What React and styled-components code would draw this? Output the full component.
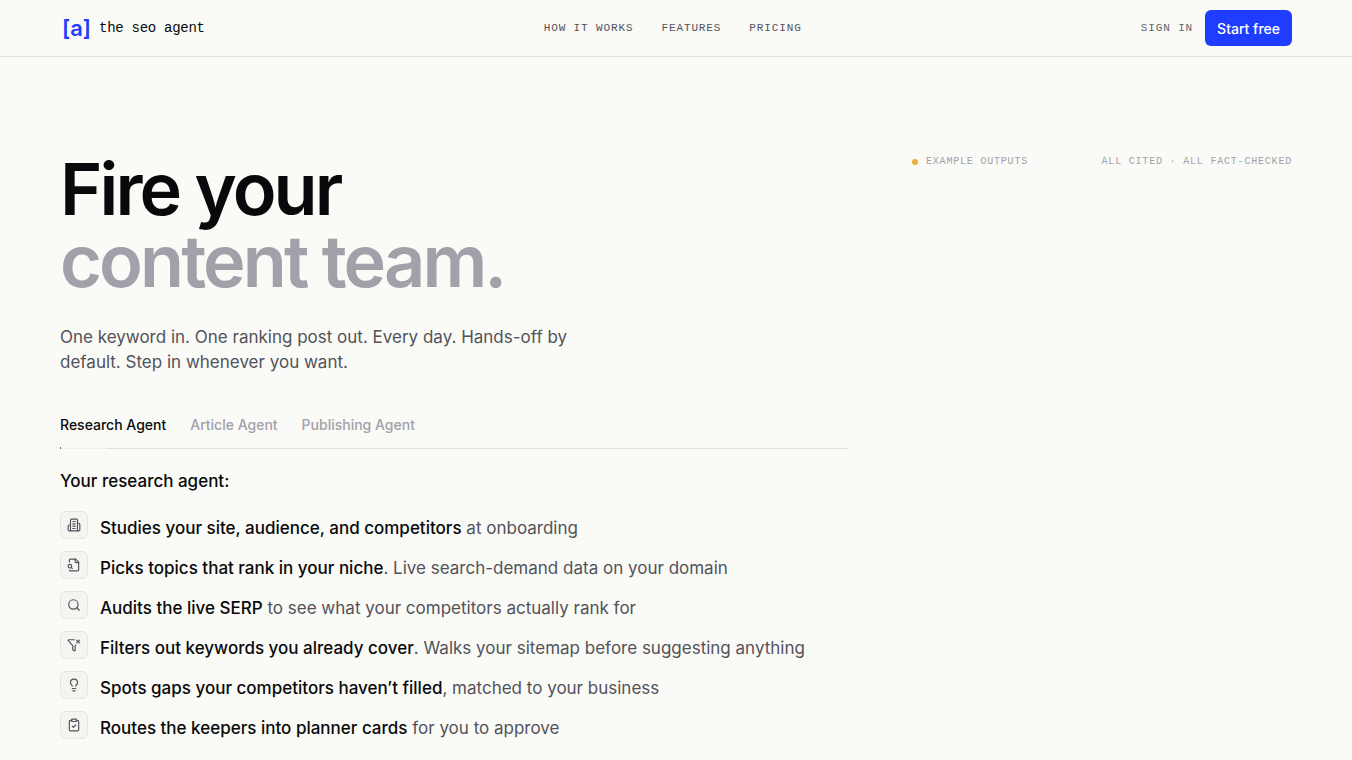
import React, { useState } from "react";
import styled, { createGlobalStyle } from "styled-components";
import { ClipboardCheck, FunnelX, Lightbulb, Search } from "lucide-react";

const agents = ["Research Agent", "Article Agent", "Publishing Agent"];

const steps = [
  { icon: BuildingIcon, title: "Studies your site, audience, and competitors", detail: " at onboarding" },
  { icon: FileLensIcon, title: "Picks topics that rank in your niche", detail: ". Live search-demand data on your domain" },
  { icon: Search, title: "Audits the live SERP", detail: " to see what your competitors actually rank for" },
  { icon: FunnelX, title: "Filters out keywords you already cover", detail: ". Walks your sitemap before suggesting anything" },
  { icon: Lightbulb, title: "Spots gaps your competitors haven’t filled", detail: ", matched to your business" },
  { icon: ClipboardCheck, title: "Routes the keepers into planner cards", detail: " for you to approve" },
];

function LineIcon({ size, children }) {
  return (
    <svg
      width={size}
      height={size}
      viewBox="0 0 24 24"
      fill="none"
      stroke="currentColor"
      strokeWidth="2"
      strokeLinecap="round"
      strokeLinejoin="round"
      aria-hidden="true"
    >
      {children}
    </svg>
  );
}

function BuildingIcon({ size }) {
  return (
    <LineIcon size={size}>
      <path d="M6 22V4a2 2 0 0 1 2-2h8a2 2 0 0 1 2 2v18Z" />
      <path d="M6 12H4a2 2 0 0 0-2 2v6a2 2 0 0 0 2 2h2" />
      <path d="M18 9h2a2 2 0 0 1 2 2v9a2 2 0 0 1-2 2h-2" />
      <path d="M10 6h4" />
      <path d="M10 10h4" />
      <path d="M10 14h4" />
      <path d="M10 18h4" />
    </LineIcon>
  );
}

function FileLensIcon({ size }) {
  return (
    <LineIcon size={size}>
      <path d="M14 2v4a2 2 0 0 0 2 2h4" />
      <path d="M4.268 21a2 2 0 0 0 1.727 1H18a2 2 0 0 0 2-2V7l-5-5H6a2 2 0 0 0-2 2v3" />
      <path d="m9 18-1.5-1.5" />
      <circle cx="5" cy="14" r="3" />
    </LineIcon>
  );
}

export default function App() {
  const [active, setActive] = useState(0);

  return (
    <>
      <GlobalStyle />
      <Header>
        <Brand href="#">
          <Mark>[a]</Mark>
          <BrandName>the seo agent</BrandName>
        </Brand>
        <Nav>
          <NavLink href="#how">How it works</NavLink>
          <NavLink href="#features">Features</NavLink>
          <NavLink href="#pricing">Pricing</NavLink>
        </Nav>
        <Actions>
          <SignIn href="#sign-in">Sign in</SignIn>
          <StartButton type="button">Start free</StartButton>
        </Actions>
      </Header>
      <Hero>
        <div>
          <Title>
            Fire your
            <Muted>content team.</Muted>
          </Title>
          <Lead>
            One keyword in. One ranking post out. Every day. Hands-off by default. Step in whenever you want.
          </Lead>
          <Tabs role="tablist">
            {agents.map((name, i) => (
              <Tab key={name} type="button" role="tab" aria-selected={i === active} $active={i === active} onClick={() => setActive(i)}>
                {name}
              </Tab>
            ))}
          </Tabs>
          <Track>
            <Progress />
          </Track>
          <ListTitle>Your research agent:</ListTitle>
          <StepList>
            {steps.map(({ icon: Icon, title, detail }) => (
              <Step key={title}>
                <IconBox>
                  <Icon size={14} />
                </IconBox>
                <StepText>
                  <strong>{title}</strong>
                  {detail}
                </StepText>
              </Step>
            ))}
          </StepList>
        </div>
        <Outputs>
          <Status>
            <Dot />
            Example outputs
          </Status>
          <span>All cited · All fact-checked</span>
        </Outputs>
      </Hero>
    </>
  );
}

const mono = `"Liberation Mono", monospace`;

const GlobalStyle = createGlobalStyle`
  * {
    box-sizing: border-box;
  }

  body {
    margin: 0;
    background: #fafaf6;
    color: #09090b;
    font-family: Inter, "Liberation Sans", sans-serif;
    -webkit-font-smoothing: antialiased;
    overflow: hidden;
  }
`;

const Header = styled.header`
  display: flex;
  align-items: center;
  justify-content: space-between;
  padding: 10px 60px;
  border-bottom: 1px solid #dfe1dc;
`;

const Brand = styled.a`
  display: flex;
  align-items: center;
  gap: 8px;
  color: inherit;
  line-height: 24px;
  text-decoration: none;
`;

const Mark = styled.span`
  padding-left: 2px;
  color: #1f3dff;
  font-size: 22px;
  font-weight: 600;
`;

const BrandName = styled.span`
  font-family: ${mono};
  font-size: 14px;
  letter-spacing: -0.02em;
`;

const Nav = styled.nav`
  display: flex;
  gap: 28px;
`;

const NavLink = styled.a`
  color: #52525b;
  font-family: ${mono};
  font-size: 11px;
  line-height: 18px;
  letter-spacing: 0.08em;
  text-decoration: none;
  text-transform: uppercase;
`;

const SignIn = styled(NavLink)`
  color: #62626b;
`;

const Actions = styled.div`
  display: flex;
  align-items: center;
  gap: 12px;
`;

const StartButton = styled.button`
  height: 36px;
  padding: 0 12px;
  border: 0;
  border-radius: 6px;
  background: #1f3dff;
  color: #fff;
  font: inherit;
  font-size: 14px;
  font-weight: 500;
`;

const Hero = styled.main`
  display: grid;
  grid-template-columns: minmax(0, 1fr) 380px;
  gap: 64px;
  padding: 96px 60px 0;
`;

const Title = styled.h1`
  margin: 0;
  font-size: 72px;
  font-weight: 600;
  line-height: 72px;
  letter-spacing: -0.04em;
`;

const Muted = styled.span`
  display: block;
  color: #a1a1aa;
`;

const Lead = styled.p`
  max-width: 520px;
  margin: 28px 0 0;
  color: #52525b;
  font-size: 17px;
  line-height: 25px;
`;

const Tabs = styled.div`
  display: flex;
  gap: 24px;
  margin-top: 40px;
`;

const Tab = styled.button`
  padding: 0 0 12px;
  border: 0;
  background: none;
  color: ${({ $active }) => ($active ? "#09090b" : "#a1a1aa")};
  font: inherit;
  font-size: 14px;
  font-weight: 500;
  line-height: 20px;
`;

/* the stretch ahead of the progress bar is paler than the rest of the rule */
const Track = styled.div`
  height: 2px;
  background: linear-gradient(90deg, #ededea 48px, #dfe1dc 48px) bottom / 100% 1px no-repeat;
`;

const Progress = styled.div`
  width: 1px;
  height: 2px;
  background: #71717a;
`;

const ListTitle = styled.h2`
  margin: 20px 0 18px;
  font-size: 17px;
  font-weight: 500;
  line-height: 24px;
`;

const StepList = styled.ul`
  display: flex;
  flex-direction: column;
  gap: 10px;
  margin: 0;
  padding: 0;
  list-style: none;
`;

const Step = styled.li`
  display: flex;
  align-items: flex-start;
  gap: 12px;
`;

const IconBox = styled.span`
  display: grid;
  flex: none;
  place-items: center;
  width: 28px;
  height: 28px;
  border: 1px solid #e6e6e2;
  border-radius: 6px;
  background: #f4f4f1;
  color: #52525b;
`;

const StepText = styled.span`
  padding-top: 4px;
  color: #52525b;
  font-size: 17px;
  line-height: 26px;

  strong {
    color: #09090b;
    font-weight: 500;
  }
`;

const Outputs = styled.aside`
  display: flex;
  align-items: flex-start;
  justify-content: space-between;
  color: #a1a1aa;
  font-family: ${mono};
  font-size: 10px;
  line-height: 17px;
  letter-spacing: 0.08em;
  text-transform: uppercase;
`;

const Status = styled.span`
  display: flex;
  align-items: center;
  gap: 8px;
`;

const Dot = styled.i`
  width: 6px;
  height: 6px;
  border-radius: 50%;
  background: #f0ae3c;
`;
